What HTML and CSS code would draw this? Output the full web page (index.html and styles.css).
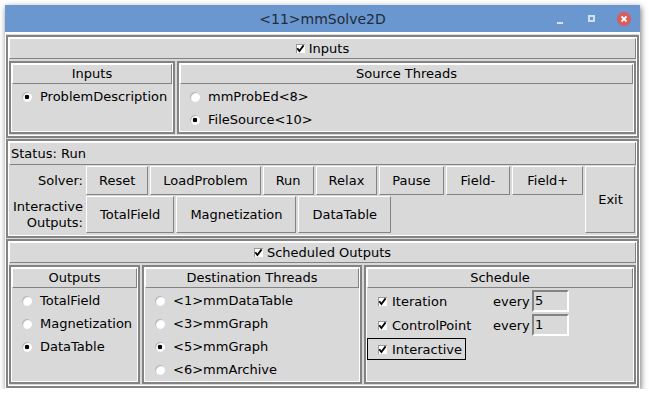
FILE: index.html
```html
<!DOCTYPE html>
<html lang="en">
<head>
    <meta charset="UTF-8">
    <title>&lt;11&gt;mmSolve2D</title>
    <link rel="stylesheet" href="styles.css">
</head>
<body>
    <div class="window">
        <div class="titlebar">
            <span></span>
            <span class="title">&lt;11&gt;mmSolve2D</span>
            <span class="win-controls">
                <span class="ctl-min"></span>
                <span class="ctl-max"></span>
                <span class="ctl-close">
                    <svg width="14" height="14" viewBox="0 0 14 14"><path d="M4.5 4.5 L9.5 9.5 M9.5 4.5 L4.5 9.5" stroke="#fff" stroke-width="1.8" fill="none"/></svg>
                </span>
            </span>
        </div>

        <div class="content">
            <!-- Inputs -->
            <div class="group">
                <div class="bar">
                    <span class="check"><svg width="9" height="9" viewBox="0 0 9 9"><polyline points="1.3,4.3 3.4,7 7.6,1.4" stroke="#000" stroke-width="1.8" fill="none"/></svg></span>
                    Inputs
                </div>
                <div class="panels">
                    <div class="panel panel-inputs">
                        <div class="panel-title">Inputs</div>
                        <div class="opts">
                            <div class="opt"><span class="radio on"></span>ProblemDescription</div>
                        </div>
                    </div>
                    <div class="panel panel-grow">
                        <div class="panel-title">Source Threads</div>
                        <div class="opts">
                            <div class="opt"><span class="radio"></span>mmProbEd&lt;8&gt;</div>
                            <div class="opt"><span class="radio on"></span>FileSource&lt;10&gt;</div>
                        </div>
                    </div>
                </div>
            </div>

            <!-- Status / solver -->
            <div class="group">
                <div class="status-bar">Status: Run</div>
                <div class="solver-grid">
                    <div class="row-label">Solver:</div>
                    <div class="btn-row">
                        <button class="btn">Reset</button>
                        <button class="btn">LoadProblem</button>
                        <button class="btn">Run</button>
                        <button class="btn">Relax</button>
                        <button class="btn">Pause</button>
                        <button class="btn btn-wide">Field-</button>
                        <button class="btn btn-wide">Field+</button>
                    </div>
                    <button class="btn exit">Exit</button>
                    <div class="row-label">Interactive<br>Outputs:</div>
                    <div class="btn-row btn-row-tall">
                        <button class="btn">TotalField</button>
                        <button class="btn">Magnetization</button>
                        <button class="btn">DataTable</button>
                    </div>
                </div>
            </div>

            <!-- Scheduled outputs -->
            <div class="group">
                <div class="bar">
                    <span class="check"><svg width="9" height="9" viewBox="0 0 9 9"><polyline points="1.3,4.3 3.4,7 7.6,1.4" stroke="#000" stroke-width="1.8" fill="none"/></svg></span>
                    Scheduled Outputs
                </div>
                <div class="panels panels-tall">
                    <div class="panel panel-outputs">
                        <div class="panel-title">Outputs</div>
                        <div class="opts">
                            <div class="opt"><span class="radio"></span>TotalField</div>
                            <div class="opt"><span class="radio"></span>Magnetization</div>
                            <div class="opt"><span class="radio on"></span>DataTable</div>
                        </div>
                    </div>
                    <div class="panel panel-dest">
                        <div class="panel-title">Destination Threads</div>
                        <div class="opts">
                            <div class="opt"><span class="radio"></span>&lt;1&gt;mmDataTable</div>
                            <div class="opt"><span class="radio"></span>&lt;3&gt;mmGraph</div>
                            <div class="opt"><span class="radio on"></span>&lt;5&gt;mmGraph</div>
                            <div class="opt"><span class="radio"></span>&lt;6&gt;mmArchive</div>
                        </div>
                    </div>
                    <div class="panel panel-grow">
                        <div class="panel-title">Schedule</div>
                        <div class="sched-grid">
                            <div class="chk"><span class="check"><svg width="9" height="9" viewBox="0 0 9 9"><polyline points="1.3,4.3 3.4,7 7.6,1.4" stroke="#000" stroke-width="1.8" fill="none"/></svg></span>Iteration</div>
                            <span class="every">every</span>
                            <div class="entry">5</div>
                            <div class="chk"><span class="check"><svg width="9" height="9" viewBox="0 0 9 9"><polyline points="1.3,4.3 3.4,7 7.6,1.4" stroke="#000" stroke-width="1.8" fill="none"/></svg></span>ControlPoint</div>
                            <span class="every">every</span>
                            <div class="entry">1</div>
                            <div class="chk focus"><span class="check"><svg width="9" height="9" viewBox="0 0 9 9"><polyline points="1.3,4.3 3.4,7 7.6,1.4" stroke="#000" stroke-width="1.8" fill="none"/></svg></span>Interactive</div>
                        </div>
                    </div>
                </div>
            </div>
        </div>
    </div>
</body>
</html>
```

FILE: styles.css
```css
body {
    margin: 0;
    background-color: #ffffff;
    font-family: 'DejaVu Sans', sans-serif;
    font-size: 13px;
    color: #000000;
}

/* Окно */
.window {
    width: 635px;
    margin: 5px 0 0 5px;
    background-color: #d9d9d9;
    box-shadow: 1px 2px 6px rgba(0, 0, 0, 0.55);
}

.titlebar {
    height: 27px;
    background-color: #6a97d0;
    display: grid;
    grid-template-columns: 1fr auto 1fr;
    align-items: center;
}

.title {
    color: #222b38;
    font-size: 14px;
}

.win-controls {
    display: flex;
    justify-content: flex-end;
    align-items: center;
}

.ctl-min {
    width: 6px;
    height: 2px;
    margin-top: 8px;
    background-color: #d3e0f2;
}

.ctl-max {
    width: 7px;
    height: 7px;
    box-sizing: border-box;
    border: 2px solid #d3e0f2;
    margin-left: 25px;
}

.ctl-close {
    width: 14px;
    height: 14px;
    border-radius: 50%;
    background-color: #dc5a5a;
    margin-left: 22px;
    margin-right: 9px;
    display: flex;
}

.content {
    border: 1px solid #ffffff;
    border-top-width: 2px;
    padding-top: 1px;
    display: flex;
    flex-direction: column;
    gap: 1px;
}

/* Рамки */
.group, .panel {
    border: 2px solid #838383;
    box-shadow: inset 1px 1px 0 #ffffff, inset -1px -1px 0 #ffffff;
    padding: 1px;
}

.bar, .panel-title, .status-bar, .btn {
    border: 1px solid;
    border-color: #ffffff #838383 #838383 #ffffff;
}

.bar {
    height: 21px;
    box-sizing: border-box;
    display: flex;
    justify-content: center;
    align-items: center;
    gap: 4px;
}

.panels {
    display: flex;
    gap: 2px;
    height: 73px;
    margin: 2px 0 1px;
}

.panels-tall {
    height: 119px;
}

.panel {
    box-sizing: border-box;
}

.panel-inputs {
    width: 166px;
}

.panel-outputs {
    width: 131px;
}

.panel-dest {
    width: 220px;
}

.panel-grow {
    flex: 1;
}

.panel-title {
    height: 20px;
    box-sizing: border-box;
    text-align: center;
    line-height: 18px;
}

.opts {
    padding-top: 1px;
}

.opt {
    height: 23px;
    display: flex;
    align-items: center;
    gap: 8px;
    padding-left: 10px;
    white-space: nowrap;
}

/* Индикаторы */
.radio {
    width: 10px;
    height: 10px;
    border-radius: 50%;
    background-color: #ffffff;
    box-shadow: inset 1px 1px 1px #b0b0b0;
    flex: none;
}

.radio.on {
    background: radial-gradient(circle, #000000 0, #000000 2px, #ffffff 2.6px);
}

.check {
    width: 9px;
    height: 9px;
    background-color: #ffffff;
    box-shadow: inset 1px 1px 0 #9a9a9a;
    display: flex;
    flex: none;
}

/* Статус и кнопки */
.status-bar {
    height: 23px;
    box-sizing: border-box;
    line-height: 21px;
    padding-left: 1px;
}

.solver-grid {
    display: grid;
    grid-template-columns: 75px 1fr 50px;
    grid-template-rows: 29px 37px;
    column-gap: 2px;
    row-gap: 1px;
    margin: 1px 2px 2px 0;
}

.row-label {
    display: flex;
    align-items: center;
    justify-content: flex-end;
    text-align: right;
    line-height: 16px;
    padding-right: 1px;
}

.btn-row {
    display: flex;
    gap: 2px;
}

.btn {
    font: inherit;
    color: #000000;
    background-color: #d9d9d9;
    padding: 0 12px;
    margin: 0;
    white-space: nowrap;
}

.btn-wide {
    padding: 0 14px;
}

.btn-row-tall .btn {
    padding: 0 13px;
}

.exit {
    grid-column: 3;
    grid-row: 1 / 3;
}

/* Расписание */
.sched-grid {
    display: grid;
    grid-template-columns: 124px 37px 37px;
    grid-auto-rows: 24px;
    column-gap: 2px;
    align-items: center;
    padding-top: 1px;
}

.chk {
    display: flex;
    align-items: center;
    gap: 5px;
    height: 22px;
    box-sizing: border-box;
    padding: 0 3px 0 10px;
    border: 1px solid transparent;
    justify-self: start;
    white-space: nowrap;
}

.chk.focus {
    border-color: #000000;
}

.entry {
    height: 22px;
    box-sizing: border-box;
    border: 2px solid;
    border-color: #838383 #ffffff #ffffff #838383;
    padding-left: 1px;
    line-height: 18px;
}
```
